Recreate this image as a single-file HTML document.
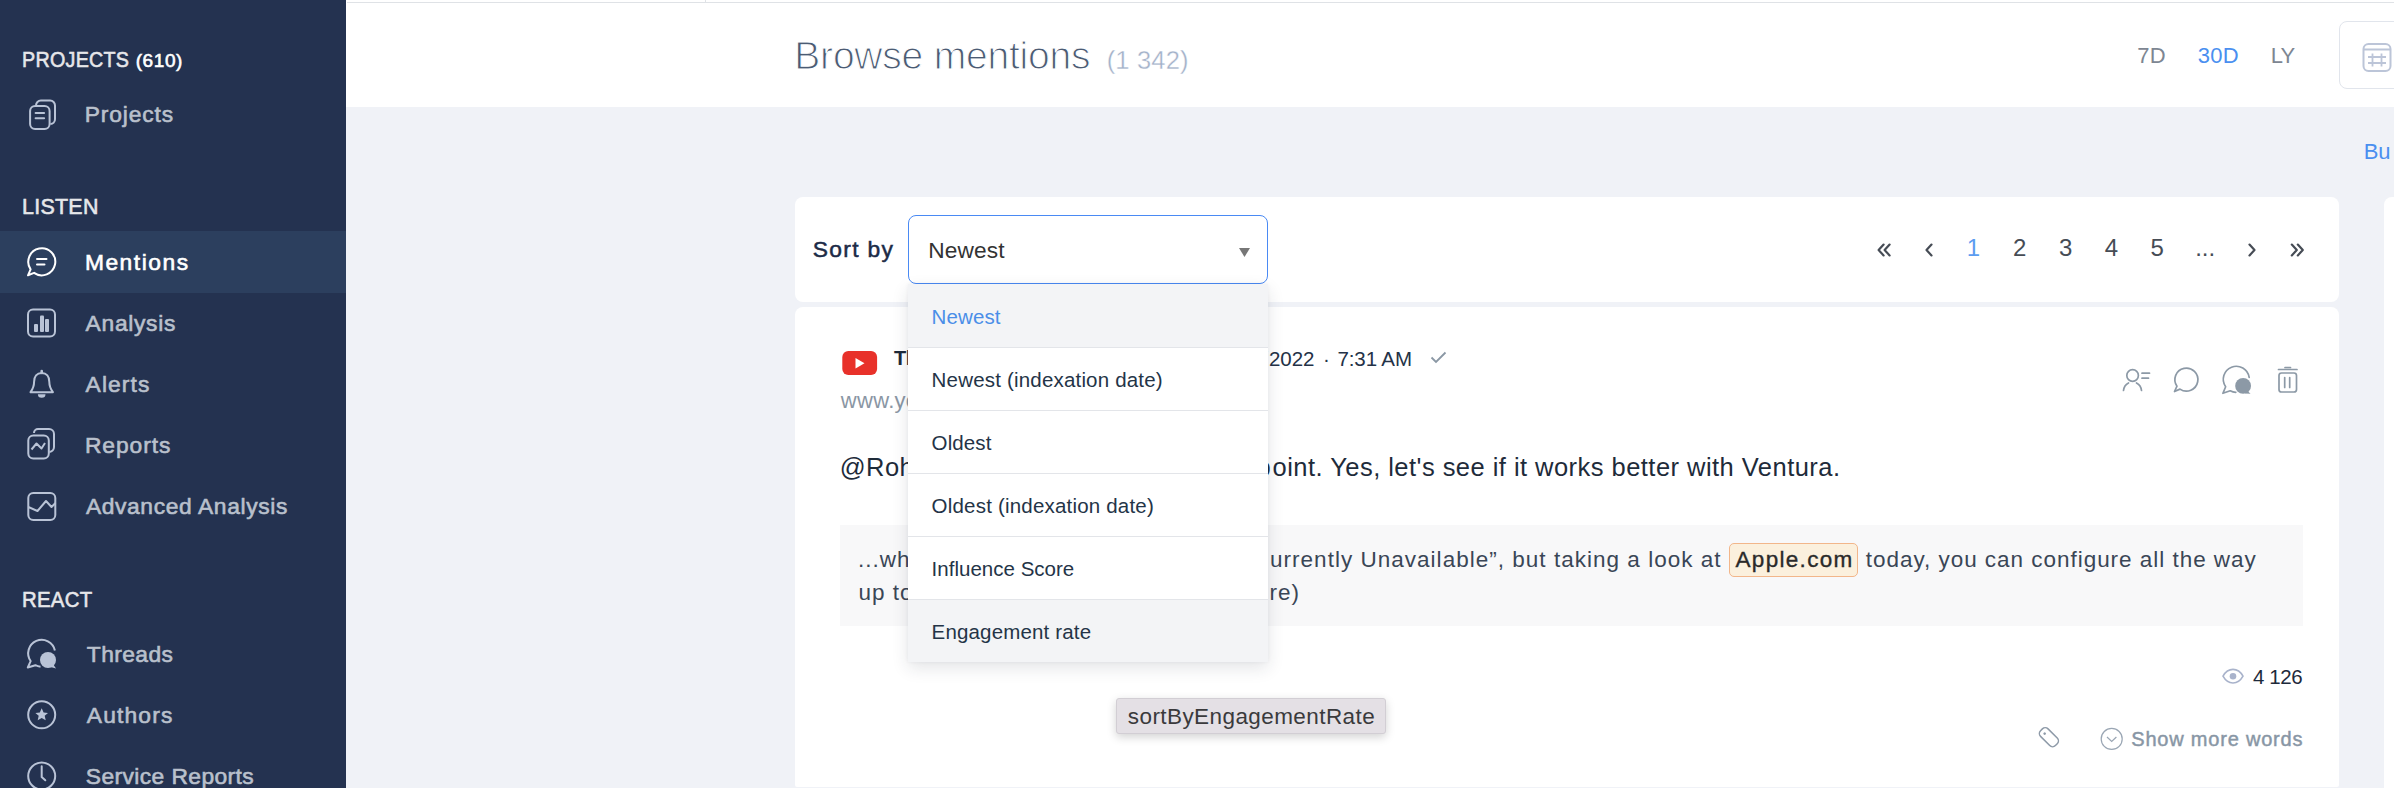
<!DOCTYPE html>
<html><head><meta charset="utf-8">
<style>
*{box-sizing:border-box;margin:0;padding:0}
html,body{width:2394px;height:788px;overflow:hidden;background:#f0f2f7;font-family:"Liberation Sans",sans-serif;position:relative}
.a{position:absolute;white-space:nowrap;line-height:normal}
svg{position:absolute;overflow:visible}
#side{position:absolute;left:0;top:0;width:346px;height:788px;background:#243250}
.sh{color:#e6e7ea;font-size:22.8px;-webkit-text-stroke:0.6px #e6e7ea}
.act{position:absolute;left:0;top:231px;width:346px;height:62px;background:#2c3f5e}
.nt{color:#b9c0cc;font-size:22.8px;-webkit-text-stroke:0.6px #b9c0cc}
.ic{stroke:#b9c3d6;fill:none;stroke-width:2}
#hdr{position:absolute;left:346px;top:0;width:2048px;height:107px;background:#fff}
.card{position:absolute;background:#fff;border-radius:8px}
</style></head><body>
<div id="side">
  <div class="a sh" style="left:22.0px;top:46px;letter-spacing:0.3px;transform:scaleX(0.865);transform-origin:0 0">PROJECTS</div><div class="a sh" style="left:135.7px;top:50.2px;font-size:19px;letter-spacing:0.58px;color:#fff;-webkit-text-stroke-color:#fff">(610)</div>
  <svg width="40" height="40" style="left:20px;top:92px" class="ic" viewBox="20 92 40 40">
    <path d="M36 105.4 a4.8 4.8 0 0 1 4.8 -4.8 h9.4 a4.8 4.8 0 0 1 4.8 4.8 v13.8 a4.8 4.8 0 0 1 -4.6 4.8"/>
    <rect x="30.1" y="105.9" width="19.5" height="23.1" rx="5"/>
    <path d="M35.6 113h8.5M35.6 118.3h8.5" stroke-linecap="round"/>
  </svg>
  <div class="a nt" style="left:84.7px;top:101px;letter-spacing:0.87px">Projects</div>

  <div class="a sh" style="left:22.3px;top:193px;letter-spacing:0.3px;transform:scaleX(0.939);transform-origin:0 0">LISTEN</div>
  <div class="act"></div>
  <svg width="40" height="40" style="left:20px;top:240px" viewBox="20 240 40 40">
    <path d="M30.6 269.35 A13.5 13.5 0 1 1 34.06 272.86 L28 275.3 Z" stroke="#fff" stroke-width="2" fill="none" stroke-linejoin="round"/>
    <path d="M37 259h9.5M37 264.4h7.5" stroke="#fff" stroke-width="2" stroke-linecap="round"/>
  </svg>
  <div class="a nt" style="left:84.9px;top:249px;color:#fff;-webkit-text-stroke-color:#fff;letter-spacing:1.53px">Mentions</div>

  <svg width="40" height="40" style="left:20px;top:302px" class="ic" viewBox="20 302 40 40">
    <rect x="28" y="309.5" width="27" height="27" rx="5"/>
    <rect x="34" y="324" width="4" height="8" rx="1" fill="#b9c3d6" stroke="none"/>
    <rect x="40" y="315.5" width="4" height="16.5" rx="1" fill="#b9c3d6" stroke="none"/>
    <rect x="45" y="319" width="4" height="13" rx="1" fill="#b9c3d6" stroke="none"/>
  </svg>
  <div class="a nt" style="left:85.6px;top:310px;letter-spacing:0.7px">Analysis</div>

  <svg width="40" height="40" style="left:20px;top:364px" class="ic" viewBox="20 364 40 40">
    <path d="M41.7 373 c-4.9 0 -7.6 3.6 -7.6 8.8 c0 4.4 -1.5 7.6 -3.6 10.4 h22.4 c-2.1 -2.8 -3.6 -6 -3.6 -10.4 c0 -5.2 -2.7 -8.8 -7.6 -8.8z" stroke-linejoin="round"/>
    <path d="M41.7 371v2" stroke-width="2.6" stroke-linecap="round"/>
    <path d="M37.9 394.2 a3.8 3.6 0 0 0 7.6 0z" fill="#b9c3d6" stroke="none"/>
  </svg>
  <div class="a nt" style="left:85.6px;top:371px;letter-spacing:1.1px">Alerts</div>

  <svg width="40" height="40" style="left:20px;top:424px" class="ic" viewBox="20 424 40 40">
    <path d="M34 433 a4 4 0 0 1 4 -4 h11 a5 5 0 0 1 5 5 v13 a5 5 0 0 1 -4.5 5"/>
    <rect x="28.3" y="435.5" width="20.5" height="23" rx="5"/>
    <path d="M31.5 449.5l5 -6 5 5 3.5 -5.5" stroke-linejoin="round"/>
  </svg>
  <div class="a nt" style="left:84.9px;top:432px;letter-spacing:0.95px">Reports</div>

  <svg width="40" height="40" style="left:20px;top:486px" class="ic" viewBox="20 486 40 40">
    <rect x="28.3" y="493" width="27" height="27" rx="5"/>
    <path d="M28.3 507l9.2 4 8.5 -10 5.5 6 4 -4" stroke-linejoin="round"/>
  </svg>
  <div class="a nt" style="left:85.9px;top:493px;letter-spacing:0.63px">Advanced Analysis</div>

  <div class="a sh" style="left:22.0px;top:586px;letter-spacing:0.3px;transform:scaleX(0.894);transform-origin:0 0">REACT</div>

  <svg width="40" height="40" style="left:20px;top:634px" viewBox="20 634 40 40">
    <path d="M54.90 650.49A13.5 13.5 0 1 0 30.64 661.04L27.8 667.5L35.36 665.22A13.5 13.5 0 0 0 40.52 666.75" stroke="#b9c3d6" stroke-width="2" fill="none" stroke-linejoin="round"/>
    <circle cx="48" cy="660" r="8" fill="#b9c3d6"/>
    <path d="M53 664 l3 4.5 -5.5 -1.5z" fill="#b9c3d6"/>
  </svg>
  <div class="a nt" style="left:86.8px;top:641px;letter-spacing:0.42px">Threads</div>

  <svg width="40" height="40" style="left:20px;top:695px" class="ic" viewBox="20 695 40 40">
    <circle cx="41.7" cy="714.8" r="13.5"/>
    <path d="M41.7 708.3 l1.9 4.2 4.4 .4 -3.3 2.9 1 4.4 -4 -2.3 -4 2.3 1 -4.4 -3.3 -2.9 4.4 -.4z" fill="#b9c3d6" stroke="none"/>
  </svg>
  <div class="a nt" style="left:86.8px;top:702px;letter-spacing:1.17px">Authors</div>

  <svg width="40" height="40" style="left:20px;top:756px" class="ic" viewBox="20 756 40 40">
    <circle cx="41.7" cy="776" r="13.5"/>
    <path d="M41.7 766.3v10.8l3.6 3.2" stroke-linecap="round"/>
  </svg>
  <div class="a nt" style="left:85.8px;top:763px;letter-spacing:0.41px">Service Reports</div>
</div>

<div id="hdr"></div>
<div style="position:absolute;left:347px;top:2px;width:2047px;height:1px;background:#dfe2e6"></div>
<div style="position:absolute;left:705px;top:0;width:1px;height:3px;background:#dfe2e6"></div>
<div class="a" style="left:794.3px;top:33.6px;font-size:39px;color:#4b5b73;-webkit-text-stroke:1.1px #fff;letter-spacing:-0.21px">Browse mentions</div>
<div class="a" style="left:1106.7px;top:45.8px;font-size:25.5px;color:#a3b1c9;-webkit-text-stroke:0.35px #fff;letter-spacing:0.17px">(1 342)</div>
<div class="a" style="left:2137.3px;top:43.3px;font-size:22px;color:#7d8692;letter-spacing:0.3px">7D</div>
<div class="a" style="left:2197.7px;top:43.3px;font-size:22px;color:#4a8ff0;letter-spacing:0.3px">30D</div>
<div class="a" style="left:2270.7px;top:43.3px;font-size:22px;color:#7d8692;letter-spacing:-0.8px">LY</div>
<div style="position:absolute;left:2339px;top:21px;width:80px;height:68px;border:1px solid #e1e5ec;border-radius:8px;background:#fff"></div>
<svg width="40" height="40" style="left:2356px;top:37px" viewBox="2356 37 40 40">
  <rect x="2363.5" y="44" width="27" height="27" rx="5" fill="none" stroke="#bcc5d8" stroke-width="2"/>
  <path d="M2363.5 49.5h27M2368 57h18M2368 63h18M2372.5 53.5v13M2381.5 53.5v13" stroke="#bcc5d8" stroke-width="1.8" fill="none"/>
</svg>
<div class="a" style="left:2363.7px;top:138.9px;font-size:22px;color:#4a8ff0">Bu</div>

<div class="card" style="left:795px;top:197px;width:1544px;height:105px"></div>
<div class="card" style="left:2384px;top:197px;width:100px;height:600px"></div>
<div class="a" style="left:812.8px;top:236px;font-size:22.8px;color:#1c2b47;-webkit-text-stroke:0.5px #1c2b47;letter-spacing:1.33px">Sort by</div>
<div style="position:absolute;left:908px;top:215px;width:360px;height:69px;border:1.5px solid #4a8af4;border-radius:8px;background:#fff"></div>
<div class="a" style="left:928.3px;top:237px;font-size:22.7px;color:#333;letter-spacing:0.1px">Newest</div>
<svg width="14" height="12" style="left:1238px;top:247px" viewBox="1238 247 14 12"><path d="M1239 248h11l-5.5 9z" fill="#777"/></svg>

<svg width="440" height="30" style="left:1870px;top:236px" viewBox="1870 236 440 30">
 <g fill="none" stroke="#464c55" stroke-width="2.2" stroke-linecap="round" stroke-linejoin="round">
  <path d="M1883.6 244.6l-5 5.4 5 5.4M1889.6 244.6l-5 5.4 5 5.4"/>
  <path d="M1931.5 244.6l-5 5.4 5 5.4"/>
  <path d="M2249.5 244.6l5 5.4 -5 5.4"/>
  <path d="M2291.8 244.6l5 5.4 -5 5.4M2297.8 244.6l5 5.4 -5 5.4"/>
 </g>
</svg>
<div class="a" style="left:1953.5px;width:40px;text-align:center;top:233.5px;font-size:24px;color:#5b9cf0">1</div>
<div class="a" style="left:1999.6px;width:40px;text-align:center;top:233.5px;font-size:24px;color:#464c55">2</div>
<div class="a" style="left:2045.8px;width:40px;text-align:center;top:233.5px;font-size:24px;color:#464c55">3</div>
<div class="a" style="left:2091.4px;width:40px;text-align:center;top:233.5px;font-size:24px;color:#464c55">4</div>
<div class="a" style="left:2137.2px;width:40px;text-align:center;top:233.5px;font-size:24px;color:#464c55">5</div>
<div class="a" style="left:2185.2px;width:40px;text-align:center;top:233.5px;font-size:24px;color:#464c55">...</div>

<div class="card" style="left:795px;top:307px;width:1544px;height:480px;border-radius:8px 8px 2px 2px"></div>
<svg width="36" height="25" style="left:842px;top:351px" viewBox="842 351 36 25">
  <rect x="842.3" y="351.1" width="34.8" height="24" rx="6" fill="#e8312a"/>
  <path d="M855.5 358v10.5l9-5.25z" fill="#fff"/>
</svg>
<div class="a" style="left:894px;top:346.7px;font-size:20px;font-weight:bold;color:#1d2939;letter-spacing:-0.4px">Tl</div>
<div class="a" style="left:1262px;top:347.3px;font-size:20.5px;color:#243247">/</div>
<div class="a" style="left:1269px;top:347.3px;font-size:20.5px;color:#243247;letter-spacing:-0.07px">2022</div>
<div class="a" style="left:1323px;top:347.3px;font-size:20.5px;color:#243247">&middot;</div>
<div class="a" style="left:1337.5px;top:347.3px;font-size:20.5px;color:#243247;letter-spacing:-0.12px">7:31 AM</div>
<svg width="20" height="16" style="left:1428px;top:349px" viewBox="1428 349 20 16"><path d="M1431.5 357.5l4.5 4.5 9.5-9.5" fill="none" stroke="#8a97a4" stroke-width="1.8"/></svg>
<div class="a" style="left:840.8px;top:388.3px;font-size:22px;color:#8a96a4;letter-spacing:0.3px">www.youtube.com</div>

<svg width="200" height="40" style="left:2115px;top:360px" viewBox="2115 360 200 40">
  <g fill="none" stroke="#8c99a6" stroke-width="1.7" stroke-linecap="round">
    <circle cx="2132.6" cy="375.5" r="5.8"/>
    <path d="M2123.5 390.5a9.5 9.5 0 0 1 5 -7.5M2136.5 383a9.5 9.5 0 0 1 5 7.5"/>
    <path d="M2142 373.2h7.5M2142 378.2h6.5"/>
    <path d="M2176.98 386.2A11.5 11.5 0 1 1 2179.97 389.13L2174.5 391.5z" stroke-linejoin="round"/>
    <path d="M2249.17 377.49A13 13 0 1 0 2225.65 386.76L2222.9 393.3L2230.20 390.78A13 13 0 0 0 2235.85 392.29" stroke-linejoin="round"/>
    <path d="M2278.5 369.5h18.5M2285 367.5h5.5"/>
    <rect x="2279" y="373" width="17.5" height="19" rx="2.5"/>
    <path d="M2284.7 377.5v10M2289.7 377.5v10"/>
  </g>
  <circle cx="2243.1" cy="385.9" r="7.9" fill="#8c99a6"/>
  <path d="M2247 390.5l3.6 3.2 -5.5 -.3z" fill="#8c99a6"/>
</svg>

<div class="a" style="left:839.7px;top:453px;font-size:25.5px;color:#1e2b3a;letter-spacing:0.46px">@Rohit Kumar Good point</div>
<div class="a" style="left:1256.5px;top:453px;font-size:25.5px;color:#1e2b3a">p</div>
<div class="a" style="left:1272.6px;top:453px;font-size:25.5px;color:#1e2b3a;letter-spacing:0.46px">oint. Yes, let's see if it works better with Ventura.</div>

<div style="position:absolute;left:840px;top:525px;width:1463px;height:101px;background:#f8f8f9"></div>
<div class="a" style="left:858.1px;top:546.5px;font-size:22.5px;color:#3a4656;letter-spacing:1px">...which is currently</div>
<div class="a" style="left:858.5px;top:580px;font-size:22.5px;color:#3a4656;letter-spacing:1px">up to the max</div>
<div class="a" style="left:1270px;top:546.5px;font-size:22.5px;color:#3a4656;letter-spacing:1.02px">urrently Unavailable&rdquo;, but taking a look at</div>
<div style="position:absolute;left:1729.3px;top:542.5px;width:128.5px;height:34px;background:#fbf0dd;border:1px solid #f2b68a;border-radius:5px"></div>
<div class="a" style="left:1735.5px;top:546.5px;font-size:22.5px;color:#2a2a2a;-webkit-text-stroke:0.35px #2a2a2a;letter-spacing:1.31px">Apple.com</div>
<div class="a" style="left:1865.8px;top:546.5px;font-size:22.5px;color:#3a4656;letter-spacing:0.97px">today, you can configure all the way</div>
<div class="a" style="left:1269.6px;top:580px;font-size:22.5px;color:#3a4656;letter-spacing:1px">re)</div>

<svg width="30" height="24" style="left:2218px;top:664px" viewBox="2218 664 30 24">
  <path d="M2223 676.2c2.5 -4.5 6 -6.8 10 -6.8s7.5 2.3 10 6.8c-2.5 4.5 -6 6.8 -10 6.8s-7.5 -2.3 -10 -6.8z" fill="none" stroke="#a9b3cb" stroke-width="1.6"/>
  <circle cx="2233" cy="676.2" r="3.3" fill="#a9b3cb"/>
</svg>
<div class="a" style="left:2252.9px;top:665.3px;font-size:20.5px;color:#1e2a3b;letter-spacing:-0.4px">4 126</div>

<svg width="30" height="30" style="left:2035px;top:723px" viewBox="2035 723 30 30">
  <g transform="translate(2048.9 737.2) rotate(45)"><rect x="-10.5" y="-5.3" width="21" height="10.6" rx="4" fill="none" stroke="#8e9aa8" stroke-width="1.5"/>
  <circle cx="-5.5" cy="0.5" r="1.3" fill="#8e9aa8"/></g>
</svg>
<svg width="30" height="30" style="left:2097px;top:724px" viewBox="2097 724 30 30">
  <circle cx="2111.7" cy="738.9" r="10.5" fill="none" stroke="#9aa6b4" stroke-width="1.2"/>
  <path d="M2107 737l4.7 4.5 4.7 -4.5" fill="none" stroke="#9aa6b4" stroke-width="1.2"/>
</svg>
<div class="a" style="left:2131.3px;top:727.8px;font-size:20px;color:#8896a5;-webkit-text-stroke:0.45px #8896a5;letter-spacing:0.79px">Show more words</div>

<div style="position:absolute;left:908px;top:284px;width:360px;height:378px;background:#fff;box-shadow:0 6px 16px rgba(30,40,60,0.12), 0 0 4px rgba(30,40,60,0.05)"></div>
<div style="position:absolute;left:908px;top:284px;width:360px;height:63px;background:#f3f4f6"></div>
<div style="position:absolute;left:908px;top:599px;width:360px;height:63px;background:#f3f4f6"></div>
<div style="position:absolute;left:908px;top:347px;width:360px;height:1px;background:#e3e5e9"></div>
<div style="position:absolute;left:908px;top:410px;width:360px;height:1px;background:#e3e5e9"></div>
<div style="position:absolute;left:908px;top:473px;width:360px;height:1px;background:#e3e5e9"></div>
<div style="position:absolute;left:908px;top:536px;width:360px;height:1px;background:#e3e5e9"></div>
<div style="position:absolute;left:908px;top:599px;width:360px;height:1px;background:#e3e5e9"></div>
<div class="a" style="left:931.6px;top:305px;font-size:20.5px;color:#4a8ee8;letter-spacing:0.1px">Newest</div>
<div class="a" style="left:931.6px;top:368px;font-size:20.5px;color:#243447;letter-spacing:0.187px">Newest (indexation date)</div>
<div class="a" style="left:931.6px;top:431px;font-size:20.5px;color:#243447;letter-spacing:0.1px">Oldest</div>
<div class="a" style="left:931.6px;top:494px;font-size:20.5px;color:#243447;letter-spacing:0.196px">Oldest (indexation date)</div>
<div class="a" style="left:931.6px;top:557px;font-size:20.5px;color:#243447;letter-spacing:0.014px">Influence Score</div>
<div class="a" style="left:931.6px;top:620px;font-size:20.5px;color:#243447;letter-spacing:0.157px">Engagement rate</div>

<div style="position:absolute;left:1115.7px;top:697.5px;width:270.6px;height:36.6px;background:#e4e0e5;border:1px solid #d2ced4;border-radius:3px;box-shadow:0 3px 10px rgba(0,0,0,0.18)"></div>
<div class="a" style="left:1127.8px;top:703.5px;font-size:22.5px;color:#3a3a3c;letter-spacing:0.42px">sortByEngagementRate</div>
</body></html>
